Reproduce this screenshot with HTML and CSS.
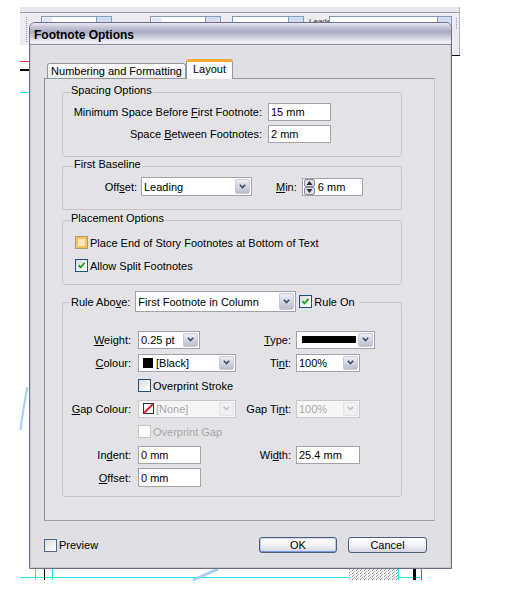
FILE: index.html
```html
<!DOCTYPE html>
<html lang="en">
<head>
<meta charset="utf-8">
<title>Footnote Options</title>
<link rel="stylesheet" href="styles.css">
</head>
<body>
<svg class="backdrop" width="510" height="595" viewBox="0 0 510 595" aria-hidden="true">
  <defs>
    <pattern id="dots" width="4" height="3" patternUnits="userSpaceOnUse">
      <rect width="4" height="3" fill="#f4f4f4"/>
      <rect x="0" y="0" width="1" height="1" fill="#8a8a8a"/>
      <rect x="2" y="1" width="1" height="1" fill="#b0b0b0"/>
      <rect x="1" y="2" width="1" height="1" fill="#9a9a9a"/>
    </pattern>
  </defs>
  <rect x="20" y="7" width="440" height="5" fill="#e6e6ec"/>
  <rect x="20" y="12" width="440" height="1" fill="#9c9ca8"/>
  <rect x="20" y="13" width="440" height="32" fill="#ececf0"/>
  <rect x="440" y="13" width="20" height="42" fill="#ececf0"/>
  <rect x="459" y="7" width="1" height="48" fill="#b4b4bc"/>
  <rect x="451" y="55" width="9" height="1" fill="#111"/>
  <line x1="26.5" y1="17" x2="26.5" y2="43" stroke="#9a9aa4" stroke-dasharray="1 1"/>
  <line x1="456.5" y1="18" x2="456.5" y2="30" stroke="#9a9aa4" stroke-dasharray="1 1"/>
  <rect x="41.5" y="16.5" width="70" height="12" fill="#fff" stroke="#7f9db9"/>
  <rect x="42.5" y="17.5" width="10" height="10" fill="#e4e8f0"/>
  <rect x="96.5" y="16.5" width="15" height="12" fill="#d3dbee" stroke="#7f9db9"/>
  <rect x="150.5" y="16.5" width="70" height="12" fill="#fff" stroke="#7f9db9"/>
  <rect x="151.5" y="17.5" width="10" height="10" fill="#e4e8f0"/>
  <rect x="205.5" y="16.5" width="15" height="12" fill="#d3dbee" stroke="#7f9db9"/>
  <rect x="232.5" y="16.5" width="71" height="12" fill="#fff" stroke="#7f9db9"/>
  <rect x="288.5" y="16.5" width="15" height="12" fill="#d3dbee" stroke="#7f9db9"/>
  <text x="309" y="24" font-family="Liberation Sans, Arial, sans-serif" font-size="8" fill="#333">Leader</text>
  <rect x="329.5" y="16.5" width="122" height="12" fill="#fff" stroke="#7f9db9"/>
  <rect x="437.5" y="16.5" width="14" height="12" fill="#d3dbee" stroke="#7f9db9"/>
  <rect x="20" y="61" width="9" height="1" fill="#e8384f"/>
  <rect x="20" y="69" width="9" height="2" fill="#000"/>
  <rect x="20" y="92" width="9" height="1" fill="#19e6f0"/>
  <path d="M27.5 387 Q23.5 406 20.5 430" stroke="#a4cdfa" stroke-width="2" fill="none"/>
  <rect x="20" y="577" width="400" height="1" fill="#19e6f0"/>
  <rect x="35" y="569" width="1" height="11" fill="#19e6f0"/>
  <rect x="52" y="569" width="1" height="11" fill="#19e6f0"/>
  <rect x="44" y="569" width="1" height="11" fill="#000"/>
  <path d="M193 580 L218 569" stroke="#a4cdfa" stroke-width="3"/>
  <rect x="349" y="569" width="49" height="11" fill="url(#dots)"/>
  <rect x="398" y="569" width="1" height="11" fill="#19e6f0"/>
  <rect x="413" y="569" width="3" height="11" fill="#000"/>
  <rect x="421" y="569" width="1" height="11" fill="#e8384f"/>
</svg>

<div class="dialog">
  <div class="titlebar">Footnote Options</div>
  <div class="body">
    <div class="tabs">
      <div class="tab">Numbering and Formatting</div>
      <div class="tab active">Layout</div>
    </div>
    <div class="panel">

      <div class="group g1">
        <div class="legend">Spacing Options</div>
        <div class="rows">
          <div class="row">
            <span class="lbl w199">Minimum Space Before <u>F</u>irst Footnote:</span>
            <span class="field w63">15 mm</span>
          </div>
          <div class="row">
            <span class="lbl w199">Space <u>B</u>etween Footnotes:</span>
            <span class="field w63">2 mm</span>
          </div>
        </div>
      </div>

      <div class="group g2">
        <div class="legend">First Baseline</div>
        <div class="row">
          <span class="lbl w74">Off<u>s</u>et:</span>
          <span class="select w111 h19">
            <span class="sel-val">Leading</span>
            <span class="sel-btn"><svg width="7" height="5" viewBox="0 0 7 5"><polyline points="0.8,0.8 3.5,3.6 6.2,0.8" fill="none" stroke="#3f4a66" stroke-width="1.6"/></svg></span>
          </span>
          <span class="min-lbl"><u>M</u>in:</span>
          <span class="field spin w61">
            <svg class="spinner" width="11" height="16" viewBox="0 0 11 16"><rect x="0.5" y="0.5" width="10" height="7" rx="1.5" fill="#dedee6" stroke="#8a8a9c"/><rect x="0.5" y="8.5" width="10" height="7" rx="1.5" fill="#dedee6" stroke="#8a8a9c"/><path d="M5.5 2 L8.5 6 H2.5 Z" fill="#2a2a35"/><path d="M5.5 14 L8.5 10 H2.5 Z" fill="#2a2a35"/></svg>
            6 mm
          </span>
        </div>
      </div>

      <div class="group g3">
        <div class="legend">Placement Options</div>
        <div class="checks">
          <div class="check-row">
            <span class="cb hot"></span>
            <span class="cb-text">Place End of Story Footnotes at Bottom of Text</span>
          </div>
          <div class="check-row">
            <span class="cb"><svg width="9" height="9" viewBox="0 0 9 9"><polyline points="1.5,4.2 3.5,6.4 7.5,1.8" fill="none" stroke="#21a121" stroke-width="1.8"/></svg></span>
            <span class="cb-text">Allow Split Footnotes</span>
          </div>
        </div>
      </div>

      <div class="group g4">
        <div class="legend-row">
          <span class="ra-lbl">Rule Abo<u>v</u>e:</span>
          <span class="select w161 h21">
            <span class="sel-val">First Footnote in Column</span>
            <span class="sel-btn"><svg width="7" height="5" viewBox="0 0 7 5"><polyline points="0.8,0.8 3.5,3.6 6.2,0.8" fill="none" stroke="#3f4a66" stroke-width="1.6"/></svg></span>
          </span>
          <span class="cb ruleon"><svg width="9" height="9" viewBox="0 0 9 9"><polyline points="1.5,4.2 3.5,6.4 7.5,1.8" fill="none" stroke="#21a121" stroke-width="1.8"/></svg></span>
          <span class="cb-text">Rule On</span>
        </div>

        <div class="rule-grid">
          <span class="gl1"><u>W</u>eight:</span>
          <span class="select w62">
            <span class="sel-val">0.25 pt</span>
            <span class="sel-btn"><svg width="7" height="5" viewBox="0 0 7 5"><polyline points="0.8,0.8 3.5,3.6 6.2,0.8" fill="none" stroke="#3f4a66" stroke-width="1.6"/></svg></span>
          </span>
          <span class="gl2"><u>T</u>ype:</span>
          <span class="select w79">
            <span class="sel-val"><span class="line-sw"></span></span>
            <span class="sel-btn"><svg width="7" height="5" viewBox="0 0 7 5"><polyline points="0.8,0.8 3.5,3.6 6.2,0.8" fill="none" stroke="#3f4a66" stroke-width="1.6"/></svg></span>
          </span>

          <span class="gl1"><u>C</u>olour:</span>
          <span class="select w98">
            <span class="sel-val"><span class="swatch"></span>[Black]</span>
            <span class="sel-btn"><svg width="7" height="5" viewBox="0 0 7 5"><polyline points="0.8,0.8 3.5,3.6 6.2,0.8" fill="none" stroke="#3f4a66" stroke-width="1.6"/></svg></span>
          </span>
          <span class="gl2">Ti<u>n</u>t:</span>
          <span class="select w64">
            <span class="sel-val">100%</span>
            <span class="sel-btn"><svg width="7" height="5" viewBox="0 0 7 5"><polyline points="0.8,0.8 3.5,3.6 6.2,0.8" fill="none" stroke="#3f4a66" stroke-width="1.6"/></svg></span>
          </span>

          <span class="span3">
            <span class="cb"></span>
            <span class="cb-text">Overprint Stroke</span>
          </span>

          <span class="gl1"><u>G</u>ap Colour:</span>
          <span class="select w98 disabled">
            <span class="sel-val"><svg class="none-sw" width="11" height="11" viewBox="0 0 11 11"><rect x="0.5" y="0.5" width="10" height="10" fill="#fff" stroke="#333"/><line x1="1.2" y1="9.8" x2="9.8" y2="1.2" stroke="#e8202a" stroke-width="2"/></svg>[None]</span>
            <span class="sel-btn"><svg width="7" height="5" viewBox="0 0 7 5"><polyline points="0.8,0.8 3.5,3.6 6.2,0.8" fill="none" stroke="#c2c2cc" stroke-width="1.6"/></svg></span>
          </span>
          <span class="gl2">Gap Ti<u>n</u>t:</span>
          <span class="select w64 disabled">
            <span class="sel-val">100%</span>
            <span class="sel-btn"><svg width="7" height="5" viewBox="0 0 7 5"><polyline points="0.8,0.8 3.5,3.6 6.2,0.8" fill="none" stroke="#c2c2cc" stroke-width="1.6"/></svg></span>
          </span>

          <span class="span3">
            <span class="cb off"></span>
            <span class="cb-text dis">Overprint Gap</span>
          </span>

          <span class="gl1">In<u>d</u>ent:</span>
          <span class="field w63">0 mm</span>
          <span class="gl2">Wi<u>d</u>th:</span>
          <span class="field w64">25.4 mm</span>

          <span class="gl1"><u>O</u>ffset:</span>
          <span class="field w63 h19">0 mm</span>
        </div>
      </div>

    </div>
    <div class="footer">
      <span class="cb preview"></span>
      <span class="cb-text">Preview</span>
      <div class="buttons">
        <span class="btn default">OK</span>
        <span class="btn cancel">Cancel</span>
      </div>
    </div>
  </div>
</div>
</body>
</html>
```

FILE: styles.css
```css
* { box-sizing: border-box; }
html, body { margin: 0; padding: 0; }
body {
  width: 510px;
  height: 595px;
  position: relative;
  overflow: hidden;
  background: #fff;
  font-family: "Liberation Sans", Arial, sans-serif;
  font-size: 11px;
  color: #000;
}
u { text-decoration: underline; text-underline-offset: 1px; }

.backdrop { position: absolute; left: 0; top: 0; display: block; }

/* dialog window */
.dialog {
  position: absolute;
  left: 29px;
  top: 22px;
  width: 423px;
  height: 547px;
  border: 1px solid #6e6e88;
  border-radius: 6px 6px 0 0;
  background: #e0e0e4;
  display: flex;
  flex-direction: column;
  box-shadow: inset 0 0 0 1px #c8c8d2;
}
.titlebar {
  flex: none;
  height: 22px;
  padding: 3px 0 0 4px;
  border-bottom: 1px solid #8c8ca2;
  border-radius: 5px 5px 0 0;
  background: linear-gradient(#e8e8f0 0%, #c6c6d8 20%, #a9a9c2 42%, #cfcfdd 68%, #f2f2f8 92%, #e6e6ee 100%);
  display: flex;
  align-items: center;
  font-size: 12px;
  font-weight: bold;
  color: #000;
}
.body {
  flex: 1;
  display: flex;
  flex-direction: column;
  padding: 14px 16px 0 14px;
}

/* tabs */
.tabs {
  display: flex;
  align-items: flex-end;
  height: 20px;
  margin-bottom: -1px;
  padding-left: 3px;
  position: relative;
  z-index: 1;
}
.tab {
  height: 15px;
  width: 139px;
  margin-bottom: 1px;
  border: 1px solid #919b9c;
  border-bottom: 0;
  border-radius: 3px 3px 0 0;
  background: linear-gradient(#ffffff, #ebebea);
  text-align: center;
  line-height: 14px;
  white-space: nowrap;
}
.tab.active {
  height: 20px;
  width: 47px;
  margin-bottom: 0;
  border-top: 3px solid #f7a933;
  background: #fcfcfe;
  line-height: 15px;
}

/* panel */
.panel {
  flex: none;
  height: 443px;
  border: 1px solid;
  border-color: #919b9c #c9c9bd #a3a3a3 #8f9396;
  background: #e3e3e7;
  padding: 13px 0 0 17px;
}

/* group boxes */
.group {
  width: 340px;
  border: 1px solid #c4c4c9;
  border-radius: 3px;
}
.g2 { margin-top: 9px; }
.g3 { margin-top: 10px; }
.g4 { margin-top: 17px; }
.legend {
  width: fit-content;
  margin: -9px 0 0 7px;
  padding: 0 1px;
  line-height: 13px;
  background: #e3e3e7;
  white-space: nowrap;
}
.g2 .legend { margin-left: 10px; }

.row {
  display: flex;
  align-items: center;
  height: 18px;
}
.lbl { flex: none; text-align: right; white-space: nowrap; }
.w199 { width: 199px; margin-right: 6px; }
.w74 { width: 74px; margin-right: 4px; }

.g1 .rows {
  display: flex;
  flex-direction: column;
  gap: 4px;
  margin-top: 6px;
  padding-bottom: 13px;
}
.g2 .row {
  height: 19px;
  margin-top: 6px;
  margin-bottom: 13px;
}
.min-lbl { margin-left: 24px; margin-right: 5px; white-space: nowrap; }

.g3 .checks {
  display: flex;
  flex-direction: column;
  gap: 10px;
  margin: 11px 0 0 12px;
  padding-bottom: 12px;
}
.check-row { display: flex; align-items: center; height: 13px; }

.legend-row {
  display: flex;
  align-items: center;
  width: fit-content;
  height: 21px;
  margin: -12px 0 0 7px;
  padding: 0 5px 0 1px;
  background: #e3e3e7;
}
.ra-lbl { margin-right: 5px; white-space: nowrap; }
.legend-row .cb { margin-left: 3px; }

.rule-grid {
  display: grid;
  grid-template-columns: 75px 98px 60px 78px;
  grid-auto-rows: 23px;
  align-items: center;
  margin-top: 16px;
  padding-bottom: 7px;
}
.gl1 { text-align: right; padding-right: 7px; white-space: nowrap; }
.gl2 { text-align: right; padding-right: 5px; white-space: nowrap; }
.span3 { grid-column: 2 / 5; display: flex; align-items: center; }

/* controls */
.field {
  flex: none;
  display: flex;
  align-items: center;
  height: 18px;
  border: 1px solid #a0a4aa;
  background: #fff;
  padding-left: 2px;
  white-space: nowrap;
}
.field.spin { padding-left: 1px; }
.spinner { margin-right: 3px; flex: none; }

.select {
  flex: none;
  display: flex;
  align-items: stretch;
  height: 18px;
  border: 1px solid #a0a4aa;
  background: #fff;
}
.sel-val {
  flex: 1;
  display: flex;
  align-items: center;
  padding-left: 2px;
  white-space: nowrap;
  overflow: hidden;
}
.sel-btn {
  flex: none;
  width: 15px;
  margin: 1px;
  border: 1px solid #c6c9d6;
  border-radius: 2px;
  background: linear-gradient(#eceef4, #babecf);
  display: flex;
  align-items: center;
  justify-content: center;
}
.select.disabled { background: #f6f6f6; border-color: #c8c8c8; color: #a8a8a8; }
.select.disabled .sel-btn { background: #f0f0f3; border-color: #e2e2e8; }

.h19 { height: 19px; }
.h21 { height: 21px; }
.w61 { width: 61px; }
.w62 { width: 62px; }
.w63 { width: 63px; }
.w64 { width: 64px; }
.w79 { width: 79px; }
.w98 { width: 98px; }
.w111 { width: 111px; }
.w161 { width: 161px; }

.swatch {
  flex: none;
  width: 10px;
  height: 10px;
  background: #000;
  margin: 0 3px 0 2px;
}
.none-sw { flex: none; margin: 0 2px 0 2px; }
.line-sw {
  flex: none;
  width: 54px;
  height: 7px;
  background: #000;
  margin-left: 3px;
}

/* checkboxes */
.cb {
  flex: none;
  width: 13px;
  height: 13px;
  border: 1px solid #1c5180;
  background: linear-gradient(135deg, #dcdcd7, #ffffff);
  display: flex;
  align-items: center;
  justify-content: center;
}
.cb.hot {
  border-color: #b09a70;
  background: #fde8b8;
  box-shadow: inset 0 0 0 2px #f8c15e;
}
.cb.off { border-color: #cac8bb; background: #fbfbfb; }
.cb.preview { border-color: #4a6890; }
.cb-text { margin-left: 2px; white-space: nowrap; }
.dis { color: #a6a6a6; }

/* footer */
.footer {
  display: flex;
  align-items: center;
  height: 16px;
  margin-top: 16px;
}
.buttons {
  margin-left: auto;
  margin-right: 8px;
  display: flex;
  gap: 11px;
}
.btn {
  width: 78px;
  height: 16px;
  border: 1px solid #4e5d80;
  border-radius: 3px;
  background: linear-gradient(#ffffff 0%, #f3f3f7 50%, #d4d4e0 100%);
  display: flex;
  align-items: center;
  justify-content: center;
}
.btn.cancel { width: 79px; }
.btn.default {
  box-shadow: inset 0 1px 0 #cedcf8, inset 0 -1px 0 #7a9ce6, inset 1px 0 0 #b4c8f4, inset -1px 0 0 #b4c8f4;
}
```
